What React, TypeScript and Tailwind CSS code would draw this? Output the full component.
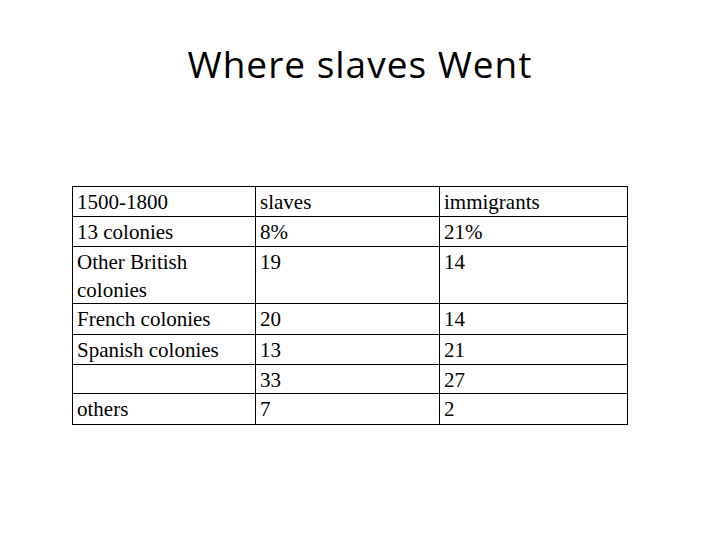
const rows: { cells: string[]; h: string }[] = [
  { cells: ["1500-1800", "slaves", "immigrants"], h: "h-[30px]" },
  { cells: ["13 colonies", "8%", "21%"], h: "h-[30px]" },
  { cells: ["Other British colonies", "19", "14"], h: "h-[57px]" },
  { cells: ["French colonies", "20", "14"], h: "h-[31px]" },
  { cells: ["Spanish colonies", "13", "21"], h: "h-[30px]" },
  { cells: ["", "33", "27"], h: "h-[29px]" },
  { cells: ["others", "7", "2"], h: "h-[31px]" },
];

const widths = ["w-[183px]", "w-[184px]", "w-[188px]"];

export default function App() {
  return (
    <div className="w-[720px] h-[540px] bg-white overflow-hidden text-black">
      <h1 className="pt-[39px] h-[186px] text-center text-[37px] tracking-[1px] leading-[50px] font-['Open_Sans',sans-serif]">
        Where slaves Went
      </h1>
      <div className="ml-[72px] w-fit border-l border-t border-black font-['Liberation_Serif',serif] text-[21px] leading-[28px]">
        {rows.map((row, i) => (
          <div key={i} className={`flex ${row.h}`}>
            {row.cells.map((cell, j) => (
              <div
                key={j}
                className={`${widths[j]} border-r border-b border-black pl-1 pr-1 pt-[1px]`}
              >
                {cell}
              </div>
            ))}
          </div>
        ))}
      </div>
    </div>
  );
}
